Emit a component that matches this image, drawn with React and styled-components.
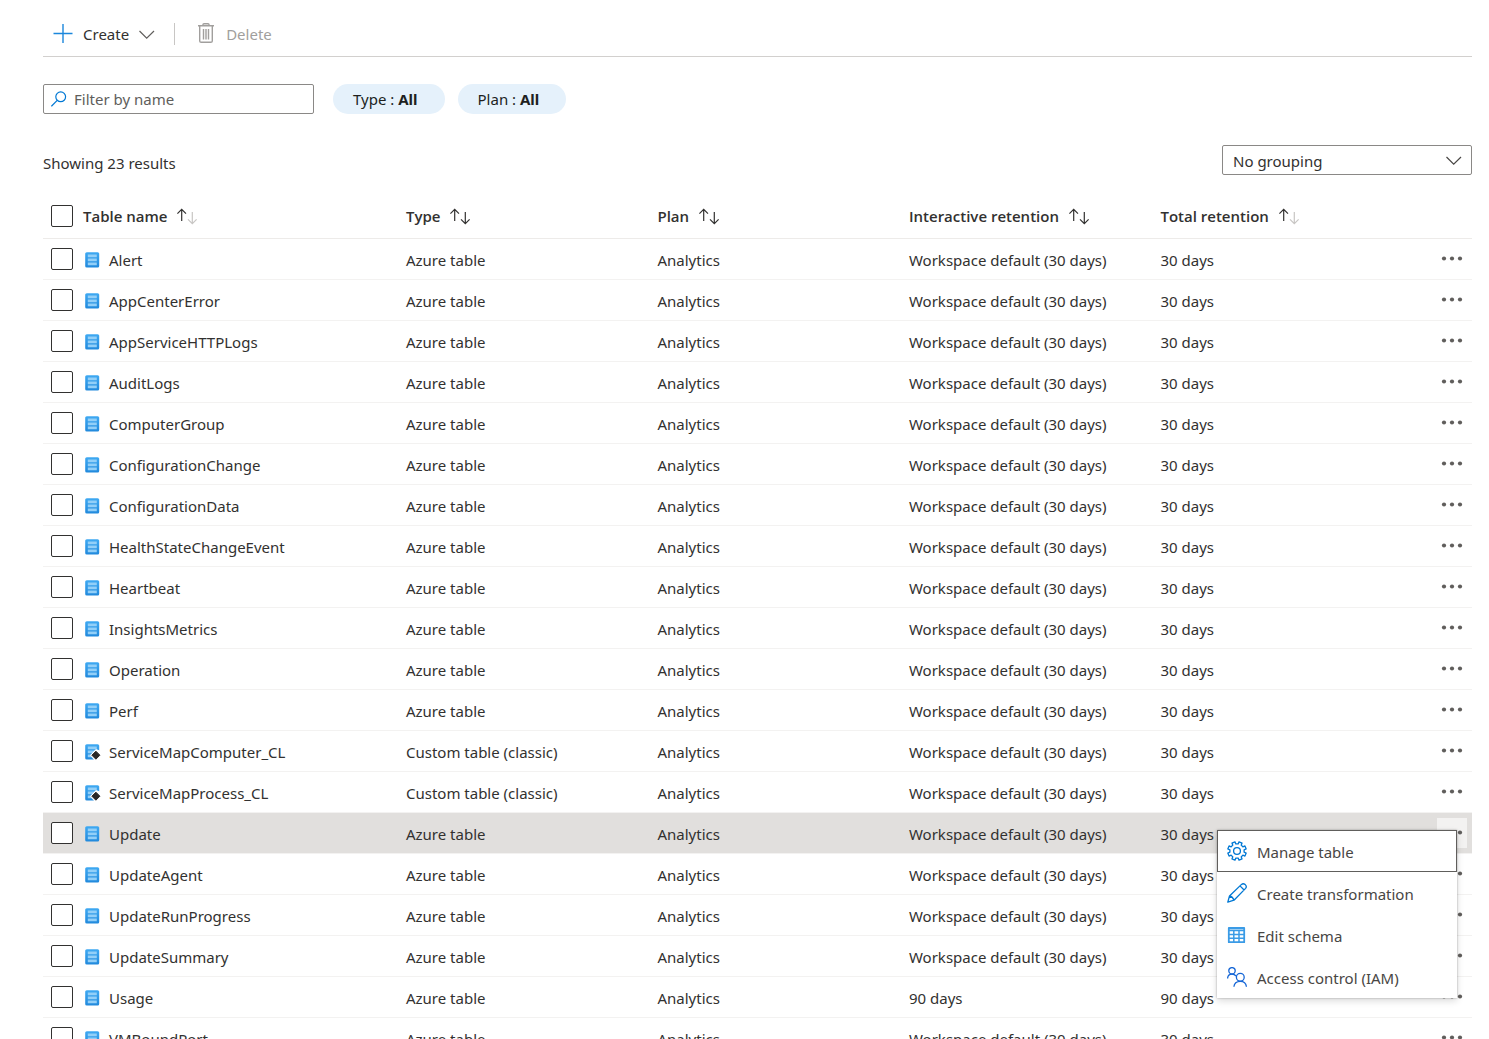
import React from "react";
import styled, { createGlobalStyle, css } from "styled-components";

const GlobalStyle = createGlobalStyle`
  *, *::before, *::after { box-sizing: border-box; }
  html { scrollbar-width: none; }
  body {
    margin: 0;
    background: #fff;
    color: #323130;
    font-family: "Noto Sans", "Open Sans", sans-serif;
    font-size: 15px;
    line-height: 20px;
  }
  button, input, select { font: inherit; color: inherit; }
`;

const Page = styled.main`
  padding: 12px 17px 0 43px;
`;

const Toolbar = styled.div`
  display: flex;
  align-items: center;
  height: 45px;
  padding: 0 10px;
  border-bottom: 1px solid #d2d0ce;
`;

const ToolbarButton = styled.button`
  display: flex;
  align-items: center;
  gap: 10px;
  height: 44px;
  padding: 0;
  border: 0;
  background: none;
  &:disabled { color: #a19f9d; }
`;

const Divider = styled.span`
  width: 1px;
  height: 22px;
  margin: 0 23px 0 19px;
  background: #c8c6c4;
`;

const Filters = styled.div`
  display: flex;
  align-items: center;
  margin-top: 27px;
`;

const SearchBox = styled.label`
  display: flex;
  align-items: center;
  gap: 7px;
  width: 271px;
  height: 30px;
  margin-right: 19px;
  padding: 0 7px;
  border: 1px solid #8a8886;
  border-radius: 2px;
`;

const SearchInput = styled.input`
  flex: 1;
  min-width: 0;
  padding: 0;
  border: 0;
  outline: 0;
  background: none;
  &::placeholder { color: #605e5c; opacity: 1; }
`;

const Pill = styled.button`
  height: 30px;
  margin-right: 13px;
  padding: 0 27px 0 20px;
  border: 0;
  border-radius: 15px;
  background: #e5f1fb;
  white-space: pre;
  text-align: left;
  color: #201f1e;
`;

const Summary = styled.div`
  display: flex;
  justify-content: space-between;
  align-items: center;
  margin-top: 31px;
`;

const ResultCount = styled.p`
  margin: 0;
  padding-top: 6px;
`;

const SelectBox = styled.div`
  display: grid;
  align-items: center;
  width: 250px;
  > * { grid-area: 1 / 1; }
  > svg { justify-self: end; margin-right: 10px; pointer-events: none; }
`;

const Select = styled.select`
  appearance: none;
  width: 100%;
  height: 30px;
  padding: 2px 30px 0 10px;
  border: 1px solid #8a8886;
  border-radius: 2px;
  background: #fff;
`;

const Table = styled.table`
  width: 100%;
  margin-top: 19px;
  border-collapse: separate;
  border-spacing: 0;
  table-layout: fixed;
`;

const Col = styled.col`
  width: ${(p) => p.$width};
`;

const HeadCell = styled.th`
  height: 45px;
  padding: 0;
  border-bottom: 1px solid #edebe9;
  font-weight: 600;
  text-align: left;
`;

const SortButton = styled.button`
  display: flex;
  align-items: center;
  gap: 10px;
  padding: 0;
  border: 0;
  background: none;
  font-family: "Open Sans", "Noto Sans", sans-serif;
  font-weight: 600;
`;

const Row = styled.tr`
  ${(p) => p.$active && css`background: #e1dfdd;`}
`;

const Cell = styled.td`
  height: 41px;
  padding: 0;
  border-bottom: 1px solid #f3f2f1;
  white-space: nowrap;
`;

const Checkbox = styled.input.attrs({ type: "checkbox" })`
  appearance: none;
  display: block;
  width: 22px;
  height: 22px;
  margin: 0 0 0 8px;
  border: 1px solid #323130;
  border-radius: 2px;
  background: #fff;
  &:checked { background: #0078d4; }
`;

const CellText = styled.div`
  display: flex;
  align-items: center;
  gap: 8px;
  padding-top: 2px;
`;

const Actions = styled.div`
  position: relative;
  width: 30px;
  height: 30px;
  margin-left: 5px;
`;

const MoreButton = styled.button`
  display: grid;
  place-items: center;
  width: 30px;
  height: 30px;
  padding: 0;
  border: 0;
  background: ${(p) => (p.$open ? "#f3f2f1" : "none")};
`;

const Menu = styled.div`
  position: absolute;
  z-index: 1;
  top: 12px;
  right: 10px;
  width: 240px;
  background: #fff;
  box-shadow: 0 3px 7px rgba(0, 0, 0, 0.14), 0 0 2px rgba(0, 0, 0, 0.3);
`;

const MenuItem = styled.button`
  display: flex;
  align-items: center;
  gap: 10px;
  width: 100%;
  height: 42px;
  padding: 0 9px;
  border: 1px solid ${(p) => (p.$focused ? "#605e5c" : "transparent")};
  background: none;
  color: #484644;
`;

const MenuLabel = styled.span`
  padding-top: 2px;
`;

function PlusIcon() {
  return (
    <svg width="20" height="20" viewBox="0 0 20 20" fill="none" stroke="#1b87dc" strokeWidth="1.4" aria-hidden="true">
      <path d="M10 0V19M0.5 9.5H19.5" />
    </svg>
  );
}

function ChevronIcon({ color = "#484644" }) {
  return (
    <svg width="16" height="12" viewBox="0 0 16 12" fill="none" stroke={color} strokeWidth="1.2" aria-hidden="true">
      <path d="M0.5 3L7.7 10.2L15 3" />
    </svg>
  );
}

function TrashIcon() {
  return (
    <svg width="18" height="22" viewBox="0 0 18 22" fill="none" stroke="#a19f9d" strokeWidth="1.4" aria-hidden="true">
      <path d="M0 2.7H16M5 2.5V1.5Q5 0.7 6 0.7H10Q11 0.7 11 1.5V2.5M1.7 3V18Q1.7 19.3 3.2 19.3H12.8Q14.3 19.3 14.3 18V3M5.5 6V16.5M8 6V16.5M10.5 6V16.5" />
    </svg>
  );
}

function SearchIcon() {
  return (
    <svg width="16" height="16" viewBox="0 0 16 16" fill="none" stroke="#0078d4" strokeWidth="1.2" aria-hidden="true">
      <circle cx="9.7" cy="5.8" r="4.9" />
      <path d="M6.2 9.3L0.4 15.3" />
    </svg>
  );
}

function SortIcon({ ascending }) {
  return (
    <svg width="21" height="18" viewBox="0 0 21 18" fill="none" strokeWidth="1.2" aria-hidden="true">
      <path stroke="#323130" d="M4.7 14V2.4M0.4 6.6L4.7 2.3L9 6.6" />
      <path stroke={ascending ? "#c8c6c4" : "#323130"} d="M15.3 5V16.6M11 12.4L15.3 16.7L19.6 12.4" />
    </svg>
  );
}

function TableIcon({ custom }) {
  return (
    <svg width="18" height="18" viewBox="0 0 18 18" aria-hidden="true">
      <defs>
        <linearGradient id="tableFill" x1="0" y1="0" x2="0" y2="1">
          <stop offset="0" stopColor="#3fa9f2" />
          <stop offset="1" stopColor="#2189dc" />
        </linearGradient>
      </defs>
      <rect x="2.2" y="1.2" width="14" height="15.4" rx="1.6" fill="url(#tableFill)" />
      <path d="M4.8 3.6H13.8V6.2H4.8ZM4.8 7.6H13.8V10.2H4.8ZM4.8 11.6H13.8V14.2H4.8Z" fill="#92cff8" />
      {custom && (
        <>
          <path d="M13 6L18 8V18H12L7 12.2Z" fill="#fff" />
          <path d="M12.9 8.2L16.9 12.2L12.9 16.2L8.9 12.2Z" fill="#292827" stroke="#292827" strokeLinejoin="round" />
        </>
      )}
    </svg>
  );
}

function MoreIcon() {
  return (
    <svg width="22" height="6" viewBox="0 0 22 6" fill="#605e5c" aria-hidden="true">
      <circle cx="3" cy="2.5" r="2.1" />
      <circle cx="11" cy="2.5" r="2.1" />
      <circle cx="19" cy="2.5" r="2.1" />
    </svg>
  );
}

const gearPath = (() => {
  const points = [];
  for (let i = 0; i < 8; i += 1) {
    [[-13, 7.2], [-10, 9.4], [10, 9.4], [13, 7.2]].forEach(([offset, radius]) => {
      const angle = ((i * 45 + 22.5 + offset) * Math.PI) / 180;
      points.push(`${(10 + radius * Math.cos(angle)).toFixed(2)} ${(10 + radius * Math.sin(angle)).toFixed(2)}`);
    });
  }
  return `M${points.join("L")}Z`;
})();

function MenuGlyph({ children, color }) {
  return (
    <svg width="20" height="20" viewBox="0 0 20 20" fill="none" stroke={color} strokeWidth="1.3" strokeLinejoin="round" aria-hidden="true">
      {children}
    </svg>
  );
}

const menuItems = [
  {
    label: "Manage table",
    icon: (
      <MenuGlyph color="#0078d4">
        <path d={gearPath} />
        <circle cx="10" cy="10" r="3.4" />
      </MenuGlyph>
    ),
  },
  {
    label: "Create transformation",
    icon: (
      <MenuGlyph color="#0078d4">
        <path d="M0.8 19.2L2.5 13L14.5 1.4Q16.2 0 18.2 1.6Q20.2 3.6 18.6 5.4L7 17.2ZM2.5 13Q5.8 13.7 7 17.2M13 2.9L17.1 7" />
      </MenuGlyph>
    ),
  },
  {
    label: "Edit schema",
    icon: (
      <MenuGlyph color="#3a9be6">
        <path strokeWidth="1.8" d="M1.8 3H17.2V17.2H1.8ZM1.8 5.4H17.2" />
        <path strokeWidth="1.5" d="M1.8 9.5H17.2M1.8 13.3H17.2M6.8 5.5V17.3M12 5.5V17.3" />
      </MenuGlyph>
    ),
  },
  {
    label: "Access control (IAM)",
    icon: (
      <MenuGlyph color="#1566d6">
        <circle cx="5" cy="3.8" r="3.2" />
        <circle cx="13.3" cy="10.3" r="3.9" />
        <path d="M0.6 11.5Q0.8 7.1 5 7.1Q7.6 7.1 9 9M6.9 19.8Q7.4 14.3 13.3 14.3Q19 14.3 19.4 19.8" />
      </MenuGlyph>
    ),
  },
];

const names = [
  "Alert", "AppCenterError", "AppServiceHTTPLogs", "AuditLogs", "ComputerGroup",
  "ConfigurationChange", "ConfigurationData", "HealthStateChangeEvent", "Heartbeat",
  "InsightsMetrics", "Operation", "Perf", "ServiceMapComputer_CL", "ServiceMapProcess_CL",
  "Update", "UpdateAgent", "UpdateRunProgress", "UpdateSummary", "Usage", "VMBoundPort",
];

const rows = names.map((name) => ({
  name,
  custom: name.endsWith("_CL"),
  interactive: name === "Usage" ? "90 days" : "Workspace default (30 days)",
  total: name === "Usage" ? "90 days" : "30 days",
}));

const columns = [
  { label: "Table name", ascending: true },
  { label: "Type" },
  { label: "Plan" },
  { label: "Interactive retention" },
  { label: "Total retention", ascending: true },
];

function RowMenu() {
  return (
    <Menu role="menu">
      {menuItems.map((item, index) => (
        <MenuItem key={item.label} role="menuitem" $focused={index === 0}>
          {item.icon}
          <MenuLabel>{item.label}</MenuLabel>
        </MenuItem>
      ))}
    </Menu>
  );
}

function TableRow({ row }) {
  const open = row.name === "Update";
  return (
    <Row $active={open}>
      <Cell><Checkbox aria-label={`Select ${row.name}`} /></Cell>
      <Cell><CellText><TableIcon custom={row.custom} />{row.name}</CellText></Cell>
      <Cell><CellText>{row.custom ? "Custom table (classic)" : "Azure table"}</CellText></Cell>
      <Cell><CellText>Analytics</CellText></Cell>
      <Cell><CellText>{row.interactive}</CellText></Cell>
      <Cell><CellText>{row.total}</CellText></Cell>
      <Cell>
        <Actions>
          <MoreButton $open={open} aria-label={`More actions for ${row.name}`}><MoreIcon /></MoreButton>
          {open && <RowMenu />}
        </Actions>
      </Cell>
    </Row>
  );
}

export default function App() {
  return (
    <>
      <GlobalStyle />
      <Page>
        <Toolbar>
          <ToolbarButton><PlusIcon />Create<ChevronIcon color="#605e5c" /></ToolbarButton>
          <Divider />
          <ToolbarButton disabled><TrashIcon />Delete</ToolbarButton>
        </Toolbar>
        <Filters>
          <SearchBox>
            <SearchIcon />
            <SearchInput aria-label="Filter by name" placeholder="Filter by name" />
          </SearchBox>
          <Pill>Type : <b>All</b></Pill>
          <Pill>Plan : <b>All</b></Pill>
        </Filters>
        <Summary>
          <ResultCount>Showing 23 results</ResultCount>
          <SelectBox>
            <Select aria-label="Grouping">
              <option>No grouping</option>
            </Select>
            <ChevronIcon />
          </SelectBox>
        </Summary>
        <Table>
          <colgroup>
            <Col $width="40px" />
            <Col $width="22.6%" />
            <Col $width="17.6%" />
            <Col $width="17.6%" />
            <Col $width="17.6%" />
            <Col />
            <Col $width="40px" />
          </colgroup>
          <thead>
            <tr>
              <HeadCell><Checkbox aria-label="Select all tables" /></HeadCell>
              {columns.map((column) => (
                <HeadCell key={column.label} scope="col">
                  <SortButton>{column.label}<SortIcon ascending={column.ascending} /></SortButton>
                </HeadCell>
              ))}
              <HeadCell aria-label="Actions" />
            </tr>
          </thead>
          <tbody>
            {rows.map((row) => <TableRow key={row.name} row={row} />)}
          </tbody>
        </Table>
      </Page>
    </>
  );
}
